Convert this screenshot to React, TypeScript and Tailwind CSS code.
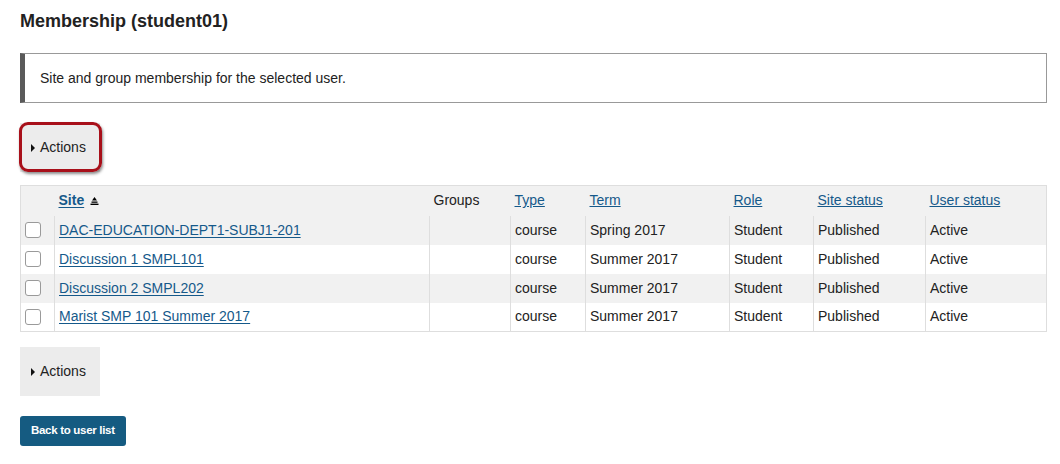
import React from "react";

const rows = [
  { site: "DAC-EDUCATION-DEPT1-SUBJ1-201", term: "Spring 2017" },
  { site: "Discussion 1 SMPL101", term: "Summer 2017" },
  { site: "Discussion 2 SMPL202", term: "Summer 2017" },
  { site: "Marist SMP 101 Summer 2017", term: "Summer 2017" },
];

function SortIcon() {
  return (
    <svg width="9" height="8" viewBox="0 0 9 8" className="ml-1.5 inline-block">
      <path d="M4.5 0 L7 3.6 L2 3.6 Z" fill="#000" />
      <rect x="1.5" y="4.5" width="6" height="1.3" fill="#000" />
      <rect x="0.5" y="6.6" width="8" height="1.4" fill="#000" />
    </svg>
  );
}

function ActionsButton({ highlight }: { highlight?: boolean }) {
  return (
    <div className="relative w-[80px] h-[49px] bg-[#ececec] flex items-center pl-[11px] text-[14px] text-[#222]">
      <span className="mr-[5px] inline-block w-0 h-0 border-y-[4px] border-y-transparent border-l-[4px] border-l-[#111]" />
      Actions
      {highlight && (
        <div className="absolute -left-[1px] -top-[1px] w-[83px] h-[50px] rounded-[9px] border-[3px] border-[#a8101a] shadow-[1px_2px_3px_rgba(0,0,0,0.45)]" />
      )}
    </div>
  );
}

export default function App() {
  const cell = "h-[29px] px-[4px] align-middle border-l border-[#dedede]";
  return (
    <div className="bg-white w-[1060px] h-[464px] px-[20px] pt-[11px] text-[14px] text-[#222]" style={{ fontFamily: '"Liberation Sans", Arial, sans-serif' }}>
      <h1 className="text-[18px] font-bold leading-[21px] text-[#222]">Membership (student01)</h1>

      <div className="mt-[21px] w-[1027px] h-[50px] border border-[#999] border-l-[5px] border-l-[#5a5a5a] flex items-center pl-[15px] text-[14px]">
        Site and group membership for the selected user.
      </div>

      <div className="mt-[20px]">
        <ActionsButton highlight />
      </div>

      <table className="mt-[13px] w-[1027px] border border-[#dedede] border-collapse text-[14px]">
        <thead>
          <tr className="bg-[#f1f1f1] h-[30px] text-left">
            <th className="w-[34px]"></th>
            <th className="w-[375px] px-[4px] font-bold">
              <span className="text-[#15598a] underline underline-offset-2 inline-flex items-center">
                Site
                <SortIcon />
              </span>
            </th>
            <th className="w-[81px] px-[4px] font-normal">Groups</th>
            <th className="w-[75px] px-[4px] font-normal"><span className="text-[#15598a] underline">Type</span></th>
            <th className="w-[144px] px-[4px] font-normal"><span className="text-[#15598a] underline">Term</span></th>
            <th className="w-[84px] px-[4px] font-normal"><span className="text-[#15598a] underline">Role</span></th>
            <th className="w-[112px] px-[4px] font-normal"><span className="text-[#15598a] underline">Site status</span></th>
            <th className="px-[4px] font-normal"><span className="text-[#15598a] underline">User status</span></th>
          </tr>
        </thead>
        <tbody>
          {rows.map((r, i) => (
            <tr key={r.site} className={i % 2 === 0 ? "bg-[#f1f1f1]" : "bg-white"}>
              <td className="h-[29px] pl-[4px] align-middle">
                <span className="block w-[16px] h-[16px] rounded-[3px] border border-[#9a9a9a] bg-white" />
              </td>
              <td className={cell}>
                <span className="text-[#15598a] underline underline-offset-2">{r.site}</span>
              </td>
              <td className={cell}></td>
              <td className={cell}>course</td>
              <td className={cell}>{r.term}</td>
              <td className={cell}>Student</td>
              <td className={cell}>Published</td>
              <td className={cell}>Active</td>
            </tr>
          ))}
        </tbody>
      </table>

      <div className="mt-[15px]">
        <ActionsButton />
      </div>

      <button className="mt-[20px] h-[30px] px-[11px] rounded-[3px] bg-[#155b81] text-white text-[11.5px] font-bold tracking-[-0.3px]">
        Back to user list
      </button>
    </div>
  );
}
